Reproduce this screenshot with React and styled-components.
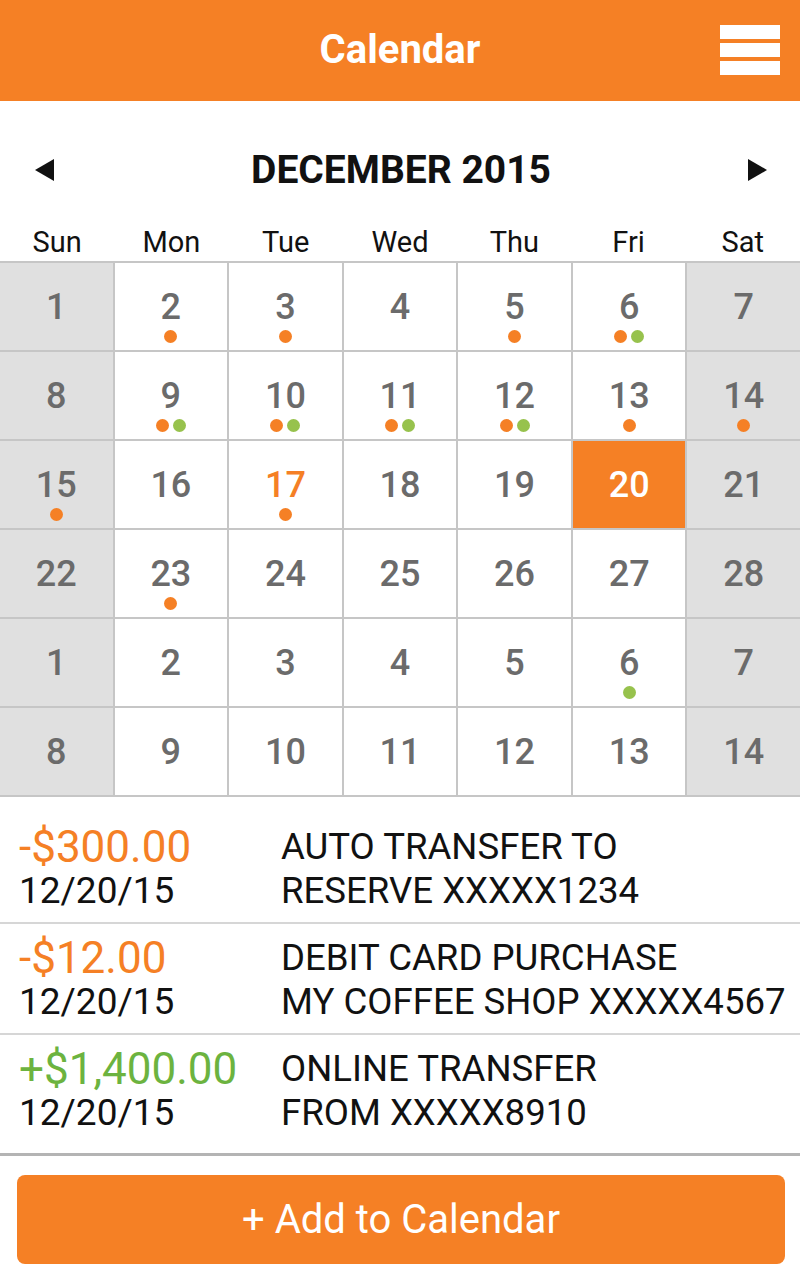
import React from "react";
import styled, { createGlobalStyle } from "styled-components";

const ORANGE = "#f58025";
const GREEN = "#6cb33f";
const DOT_GREEN = "#97c24d";

const GlobalStyle = createGlobalStyle`
  html, body {
    margin: 0;
    padding: 0;
    background: #ffffff;
  }
  body {
    font-family: Roboto, "Liberation Sans", sans-serif;
    color: #111111;
  }
  * {
    box-sizing: border-box;
  }
`;

const weeks = [
  [
    { day: 1, weekend: true },
    { day: 2, dots: ["o"] },
    { day: 3, dots: ["o"] },
    { day: 4 },
    { day: 5, dots: ["o"] },
    { day: 6, dots: ["o", "g"] },
    { day: 7, weekend: true },
  ],
  [
    { day: 8, weekend: true },
    { day: 9, dots: ["o", "g"] },
    { day: 10, dots: ["o", "g"] },
    { day: 11, dots: ["o", "g"] },
    { day: 12, dots: ["o", "g"] },
    { day: 13, dots: ["o"] },
    { day: 14, weekend: true, dots: ["o"] },
  ],
  [
    { day: 15, weekend: true, dots: ["o"] },
    { day: 16 },
    { day: 17, selected: true, dots: ["o"] },
    { day: 18 },
    { day: 19 },
    { day: 20, today: true },
    { day: 21, weekend: true },
  ],
  [
    { day: 22, weekend: true },
    { day: 23, dots: ["o"] },
    { day: 24 },
    { day: 25 },
    { day: 26 },
    { day: 27 },
    { day: 28, weekend: true },
  ],
  [
    { day: 1, weekend: true },
    { day: 2 },
    { day: 3 },
    { day: 4 },
    { day: 5 },
    { day: 6, dots: ["g"] },
    { day: 7, weekend: true },
  ],
  [
    { day: 8, weekend: true },
    { day: 9 },
    { day: 10 },
    { day: 11 },
    { day: 12 },
    { day: 13 },
    { day: 14, weekend: true },
  ],
];

const transactions = [
  {
    id: 1,
    amount: "-$300.00",
    credit: false,
    date: "12/20/15",
    lines: ["AUTO TRANSFER TO", "RESERVE XXXXX1234"],
  },
  {
    id: 2,
    amount: "-$12.00",
    credit: false,
    date: "12/20/15",
    lines: ["DEBIT CARD PURCHASE", "MY COFFEE SHOP XXXXX4567"],
  },
  {
    id: 3,
    amount: "+$1,400.00",
    credit: true,
    date: "12/20/15",
    lines: ["ONLINE TRANSFER", "FROM XXXXX8910"],
  },
];

const dayNames = ["Sun", "Mon", "Tue", "Wed", "Thu", "Fri", "Sat"];

// Layout
const Page = styled.div`
  width: 800px;
  min-height: 1280px;
  background: #ffffff;
`;

const Header = styled.header`
  height: 101px;
  background: ${ORANGE};
  display: grid;
  grid-template-columns: 1fr auto 1fr;
  align-items: center;
  padding: 0 20px 2px 20px;
`;

const Title = styled.h1`
  grid-column: 2;
  margin: 0;
  font-size: 40px;
  font-weight: 700;
  color: #ffffff;
  line-height: 1;
`;

const MenuButton = styled.button`
  justify-self: end;
  width: 60px;
  display: flex;
  flex-direction: column;
  gap: 4px;
  padding: 0;
  border: none;
  background: none;
  cursor: pointer;
`;

const MenuBar = styled.span`
  display: block;
  height: 14px;
  background: #ffffff;
`;

const MonthBar = styled.div`
  display: grid;
  grid-template-columns: auto 1fr auto;
  align-items: center;
  height: 58px;
  margin-top: 40px;
  padding: 0 33px 0 35px;
`;

const MonthTitle = styled.h2`
  margin: 0;
  text-align: center;
  font-size: 39px;
  font-weight: 700;
  line-height: 58px;
  color: #111111;
`;

const ArrowButton = styled.button`
  display: flex;
  padding: 0;
  border: none;
  background: none;
  cursor: pointer;
`;

const WeekRow = styled.div`
  display: grid;
  grid-template-columns: repeat(7, 1fr);
  height: 62px;
  padding-top: 24px;
`;

const DayName = styled.div`
  text-align: center;
  font-size: 29px;
  line-height: 38px;
  color: #111111;
`;

const Grid = styled.div`
  display: grid;
  grid-template-columns: repeat(7, 1fr);
  grid-auto-rows: 87px;
  gap: 2px;
  background: #c6c6c6;
  border-top: 2px solid #c6c6c6;
  border-bottom: 2px solid #c6c6c6;
`;

const Cell = styled.div`
  display: grid;
  grid-template-rows: 1fr auto 1fr;
  justify-items: center;
  background: ${(p) => (p.$today ? ORANGE : p.$weekend ? "#e0e0e0" : "#ffffff")};
`;

const DayNumber = styled.span`
  grid-row: 2;
  font-size: 36px;
  font-weight: 500;
  line-height: 36px;
  color: ${(p) => (p.$today ? "#ffffff" : p.$selected ? ORANGE : "#6b6b6b")};
`;

const Dots = styled.div`
  grid-row: 3;
  align-self: start;
  display: flex;
  gap: 4px;
  margin-top: 5px;
`;

const Dot = styled.span`
  width: 13px;
  height: 13px;
  border-radius: 50%;
  background: ${(p) => (p.$green ? DOT_GREEN : ORANGE)};
`;

const List = styled.div`
  padding-top: 16px;
`;

const Row = styled.div`
  display: grid;
  grid-template-columns: 262px 1fr;
  padding: 12px 0 9px 19px;
  border-bottom: 2px solid #d6d6d6;

  &:last-child {
    padding-bottom: 18px;
    border-bottom: 3px solid #b4b4b4;
  }
`;

const Amount = styled.div`
  font-size: 44px;
  line-height: 44px;
  color: ${(p) => (p.$credit ? GREEN : ORANGE)};
`;

const DateText = styled.div`
  font-size: 37px;
  line-height: 44px;
  color: #111111;
`;

const Description = styled.div`
  font-size: 36.6px;
  line-height: 44px;
  color: #111111;
  white-space: nowrap;
`;

const AddButton = styled.button`
  display: block;
  width: 768px;
  height: 89px;
  margin: 19px 0 0 17px;
  border: none;
  border-radius: 8px;
  background: ${ORANGE};
  color: #ffffff;
  font-family: Roboto, "Liberation Sans", sans-serif;
  font-size: 40px;
  cursor: pointer;
`;

function Arrow({ dir }) {
  return (
    <svg width="19" height="22" viewBox="0 0 19 22">
      {dir === "left" ? (
        <polygon points="19,0 19,22 0,11" fill="#111" />
      ) : (
        <polygon points="0,0 0,22 19,11" fill="#111" />
      )}
    </svg>
  );
}

export default function App() {
  return (
    <Page>
      <GlobalStyle />
      <Header>
        <Title>Calendar</Title>
        <MenuButton aria-label="Menu">
          <MenuBar />
          <MenuBar />
          <MenuBar />
        </MenuButton>
      </Header>

      <MonthBar>
        <ArrowButton aria-label="Previous month">
          <Arrow dir="left" />
        </ArrowButton>
        <MonthTitle>DECEMBER 2015</MonthTitle>
        <ArrowButton aria-label="Next month">
          <Arrow dir="right" />
        </ArrowButton>
      </MonthBar>

      <WeekRow>
        {dayNames.map((d) => (
          <DayName key={d}>{d}</DayName>
        ))}
      </WeekRow>

      <Grid>
        {weeks.flat().map((c, i) => (
          <Cell key={i} $weekend={c.weekend} $today={c.today}>
            <DayNumber $today={c.today} $selected={c.selected}>
              {c.day}
            </DayNumber>
            {c.dots && (
              <Dots>
                {c.dots.map((d, j) => (
                  <Dot key={j} $green={d === "g"} />
                ))}
              </Dots>
            )}
          </Cell>
        ))}
      </Grid>

      <List>
        {transactions.map((t) => (
          <Row key={t.id}>
            <div>
              <Amount $credit={t.credit}>{t.amount}</Amount>
              <DateText>{t.date}</DateText>
            </div>
            <div>
              {t.lines.map((l) => (
                <Description key={l}>{l}</Description>
              ))}
            </div>
          </Row>
        ))}
      </List>

      <AddButton>+ Add to Calendar</AddButton>
    </Page>
  );
}
